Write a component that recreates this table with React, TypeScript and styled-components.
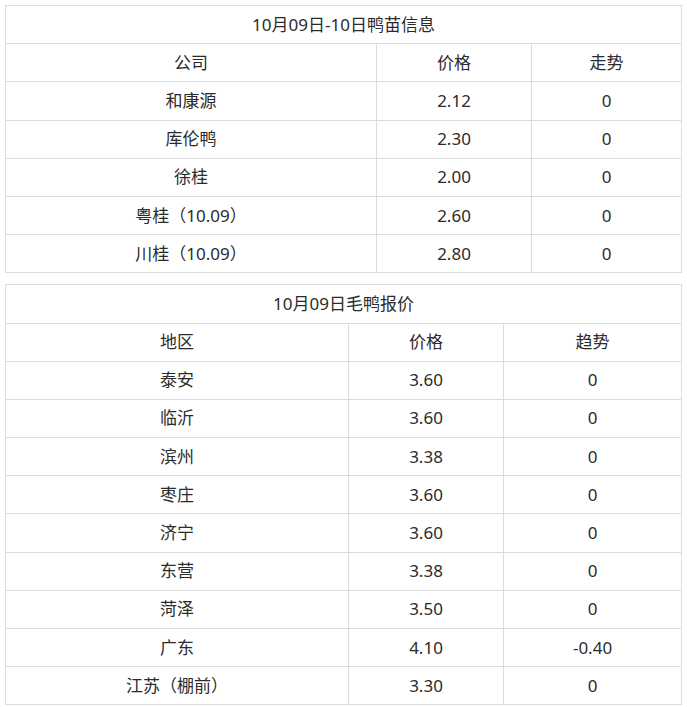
import { createGlobalStyle, styled } from "styled-components";

const GlobalStyle = createGlobalStyle`
  html, body {
    margin: 0;
    padding: 0;
    background: #fff;
  }
  body {
    font-family: "Noto Sans", "Noto Sans CJK SC", sans-serif;
    color: #2b2b2b;
  }
`;

const Page = styled.div`
  padding: 5px;
  display: flex;
  flex-direction: column;
  gap: 11px;
`;

const Table = styled.table`
  width: 677px;
  border-collapse: collapse;
  table-layout: fixed;
  font-size: 17px;
  color: #2b2b2b;
  td {
    border: 1px solid #dcdcdc;
    height: 37.2px;
    padding: 0;
    text-align: center;
    vertical-align: middle;
    line-height: 20px;
  }
`;

interface PriceTableProps {
  title: string;
  head: [string, string, string];
  widths: [number, number, number];
  rows: [string, string, string][];
}

function PriceTable({ title, head, widths, rows }: PriceTableProps) {
  return (
    <Table>
      <colgroup>
        {widths.map((w, i) => (
          <col key={i} style={{ width: w }} />
        ))}
      </colgroup>
      <tbody>
        <tr>
          <td colSpan={3}>{title}</td>
        </tr>
        <tr>
          {head.map((h) => (
            <td key={h}>{h}</td>
          ))}
        </tr>
        {rows.map((r) => (
          <tr key={r[0]}>
            {r.map((c, i) => (
              <td key={i}>{c}</td>
            ))}
          </tr>
        ))}
      </tbody>
    </Table>
  );
}

const duckling: [string, string, string][] = [
  ["和康源", "2.12", "0"],
  ["库伦鸭", "2.30", "0"],
  ["徐桂", "2.00", "0"],
  ["粤桂（10.09）", "2.60", "0"],
  ["川桂（10.09）", "2.80", "0"],
];

const duck: [string, string, string][] = [
  ["泰安", "3.60", "0"],
  ["临沂", "3.60", "0"],
  ["滨州", "3.38", "0"],
  ["枣庄", "3.60", "0"],
  ["济宁", "3.60", "0"],
  ["东营", "3.38", "0"],
  ["菏泽", "3.50", "0"],
  ["广东", "4.10", "-0.40"],
  ["江苏（棚前）", "3.30", "0"],
];

export default function App() {
  return (
    <>
      <GlobalStyle />
      <Page>
        <PriceTable
          title="10月09日-10日鸭苗信息"
          head={["公司", "价格", "走势"]}
          widths={[371, 155, 150]}
          rows={duckling}
        />
        <PriceTable
          title="10月09日毛鸭报价"
          head={["地区", "价格", "趋势"]}
          widths={[343, 155, 178]}
          rows={duck}
        />
      </Page>
    </>
  );
}
